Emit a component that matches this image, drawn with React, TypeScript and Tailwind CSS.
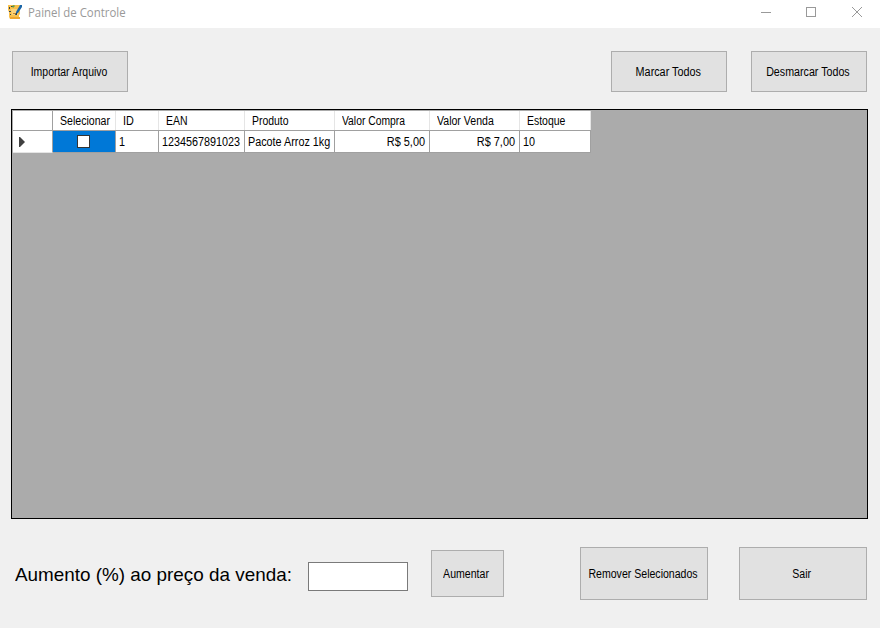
import type { ReactNode } from "react";

function Label({ children, className = "scale-x-[0.88]" }: { children: ReactNode; className?: string }) {
  return <span className={`inline-block whitespace-nowrap ${className}`}>{children}</span>;
}

function Button({ children, className, label }: { children: ReactNode; className: string; label?: string }) {
  return (
    <button className={`flex shrink-0 items-center justify-center border border-[#adadad] bg-[#e1e1e1] pr-0.5 ${className}`}>
      <Label className={label}>{children}</Label>
    </button>
  );
}

const columns = [
  { title: "Selecionar", value: "", width: "w-[63px]", head: "scale-x-[0.88]" },
  { title: "ID", value: "1", width: "w-[43px]", head: "scale-x-[0.9]" },
  { title: "EAN", value: "1234567891023", width: "w-[86px]", head: "scale-x-[0.87]" },
  { title: "Produto", value: "Pacote Arroz 1kg", width: "w-[90px]", head: "scale-x-[0.87]" },
  { title: "Valor Compra", value: "R$ 5,00", width: "w-[95px]", head: "scale-x-[0.86]", right: true },
  { title: "Valor Venda", value: "R$ 7,00", width: "w-[90px]", head: "scale-x-[0.88]", right: true },
  { title: "Estoque", value: "10", width: "w-[71px]", head: "scale-x-[0.87]" },
];

function AppIcon() {
  return (
    <svg width="16" height="16" viewBox="0 0 16 16" className="shrink-0">
      <path d="M1 1h12v9l-1 1v4H3l-1-2V8L1 6z" fill="#f9c04b" />
      <path d="M4 5h7v6H5z" fill="#fbd27a" />
      <path d="M3 13h10v2H3z" fill="#eda62f" />
      <path d="M2 3h1v2H2zM2 7h2v1H2zM3 10h1v1H3z" fill="#34454c" />
      <path d="M4 2h2v1H4z" fill="#34454c" />
      <path d="M5 2l2-1 1 1-2 2z" fill="#5e9e4a" />
      <path d="M6 9.500h3" stroke="#c58a2c" />
      <path d="M13 1h2v2l-4 6-2 1V8z" fill="#1b66a8" />
      <path d="M9 9h1v2H8z" fill="#203b52" />
    </svg>
  );
}

function TitleBar() {
  return (
    <header className="flex h-7 items-start bg-white pl-[7px] text-[#999]">
      <div className="flex h-[26px] items-center">
        <div className="-mt-0.5"><AppIcon /></div>
        <span className="ml-[5px] origin-left scale-x-[0.95] whitespace-nowrap font-['Open_Sans',sans-serif] text-[12px] leading-[26px]">
          Painel de Controle
        </span>
      </div>
      <svg className="ml-auto" width="120" height="26" viewBox="0 0 120 26" fill="none" stroke="#999" shapeRendering="crispEdges">
        <path d="M1 12.5h10" />
        <rect x="46.500" y="7.500" width="9" height="9" />
        <path d="M92 7l10 10M102 7L92 17" shapeRendering="auto" />
      </svg>
    </header>
  );
}

function Grid() {
  return (
    <section className="ml-[11px] mt-[17px] h-[410px] w-[857px] border border-black bg-[#ababab] pl-px pt-px">
      <div className="flex h-5 w-[578px] border-b border-[#a0a0a0] bg-white">
        <div className="w-10 shrink-0 border-r border-[#a0a0a0]" />
        {columns.map((c) => (
          <div key={c.title} className={`${c.width} shrink-0 border-r border-[#e5e5e5] pl-[7px] leading-[21px]`}>
            <Label className={`origin-left ${c.head}`}>{c.title}</Label>
          </div>
        ))}
      </div>
      <div className="flex h-[22px] w-[578px] bg-white">
        <div className="flex w-10 shrink-0 items-center border-b border-r border-b-[#e5e5e5] border-r-[#a0a0a0] pl-1.5 pt-px">
          <svg width="6" height="10" viewBox="0 0 6 10"><path d="M0 0h1l5 5-5 5H0z" fill="#404040" /></svg>
        </div>
        {columns.map((c, i) =>
          i === 0 ? (
            <div key={c.title} className="flex w-[63px] shrink-0 items-center justify-center border-b border-r border-[#a0a0a0] bg-[#0078d7] pr-px">
              <span className="size-[13px] border border-[#333] bg-white" />
            </div>
          ) : (
            <div key={c.title} className={`${c.width} shrink-0 border-b border-r border-[#a0a0a0] leading-[23px] ${c.right ? "pr-1 text-right" : "pl-[3px] text-left"}`}>
              <Label className={c.right ? "origin-right scale-x-[0.91]" : "origin-left scale-x-[0.9]"}>{c.value}</Label>
            </div>
          ),
        )}
      </div>
    </section>
  );
}

export default function App() {
  return (
    <main className="h-[628px] w-[880px] overflow-hidden bg-[#f0f0f0] font-['Liberation_Sans',Arial,sans-serif] text-[12px] text-black">
      <TitleBar />
      <div className="flex pl-3 pt-[23px]">
        <Button className="h-[41px] w-[116px]" label="scale-x-[0.87]">Importar Arquivo</Button>
        <Button className="ml-[483px] h-[41px] w-[116px]" label="scale-x-[0.9]">Marcar Todos</Button>
        <Button className="ml-6 h-[41px] w-[116px]" label="scale-x-[0.89]">Desmarcar Todos</Button>
      </div>
      <Grid />
      <footer className="flex pl-[15px] pt-7">
        <label htmlFor="aumento" className="w-[293px] origin-left scale-x-[0.993] whitespace-nowrap pt-[13px] text-[19px] leading-[30px]">
          Aumento (%) ao preço da venda:
        </label>
        <input id="aumento" className="mt-[15px] h-[29px] w-[100px] border border-[#7a7a7a] bg-white px-1 outline-none" />
        <Button className="ml-[23px] mt-[3px] h-[47px] w-[73px]" label="scale-x-[0.88]">Aumentar</Button>
        <Button className="ml-[76px] h-[53px] w-32" label="scale-x-[0.88]">Remover Selecionados</Button>
        <Button className="ml-[31px] h-[53px] w-32" label="scale-x-[0.88]">Sair</Button>
      </footer>
    </main>
  );
}
